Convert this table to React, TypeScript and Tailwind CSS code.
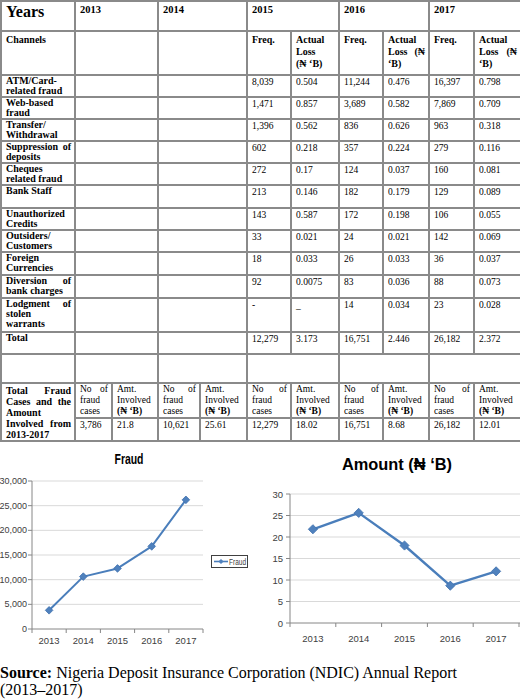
import React from "react";

type Line = string | { j: string };

const J = "text-justify [text-align-last:justify]";

function Lines({ lines }: { lines: Line[] }) {
  return (
    <>
      {lines.map((l, i) =>
        typeof l === "string" ? (
          <div key={i}>{l}</div>
        ) : (
          <div key={i} className={J}>
            {l.j}
          </div>
        )
      )}
    </>
  );
}

const cell = "border-2 border-[#8a8a8a] align-top pl-[4px] pr-[3px] pt-0";
const label = `${cell} font-bold text-[10px] leading-[10px]`;
const data = `${cell} text-[9.5px] leading-[10px] pt-[1px]`;

const rows: { label: Line[]; v: string[]; h: string }[] = [
  { label: ["ATM/Card-", "related fraud"], v: ["8,039", "0.504", "11,244", "0.476", "16,397", "0.798"], h: "h-[22px]" },
  { label: ["Web-based", "fraud"], v: ["1,471", "0.857", "3,689", "0.582", "7,869", "0.709"], h: "h-[22px]" },
  { label: ["Transfer/", "Withdrawal"], v: ["1,396", "0.562", "836", "0.626", "963", "0.318"], h: "h-[22px]" },
  { label: [{ j: "Suppression of" }, "deposits"], v: ["602", "0.218", "357", "0.224", "279", "0.116"], h: "h-[22px]" },
  { label: ["Cheques", "related fraud"], v: ["272", "0.17", "124", "0.037", "160", "0.081"], h: "h-[22px]" },
  { label: ["Bank Staff"], v: ["213", "0.146", "182", "0.179", "129", "0.089"], h: "h-[23px]" },
  { label: ["Unauthorized", "Credits"], v: ["143", "0.587", "172", "0.198", "106", "0.055"], h: "h-[22px]" },
  { label: ["Outsiders/", "Customers"], v: ["33", "0.021", "24", "0.021", "142", "0.069"], h: "h-[22px]" },
  { label: ["Foreign", "Currencies"], v: ["18", "0.033", "26", "0.033", "36", "0.037"], h: "h-[23px]" },
  { label: [{ j: "Diversion of" }, "bank charges"], v: ["92", "0.0075", "83", "0.036", "88", "0.073"], h: "h-[23px]" },
  { label: [{ j: "Lodgment of" }, "stolen", "warrants"], v: ["-", "_", "14", "0.034", "23", "0.028"], h: "h-[34px]" },
  { label: ["Total"], v: ["12,279", "3.173", "16,751", "2.446", "26,182", "2.372"], h: "h-[22px]" },
];

const totals = ["3,786", "21.8", "10,621", "25.61", "12,279", "18.02", "16,751", "8.68", "26,182", "12.01"];

function FraudTable() {
  return (
    <table className="table-fixed border-collapse w-[520px] font-['Liberation_Serif',serif] text-black">
      <colgroup>
        <col className="w-[74px]" />
        <col className="w-[37px]" />
        <col className="w-[46px]" />
        <col className="w-[42px]" />
        <col className="w-[47px]" />
        <col className="w-[44px]" />
        <col className="w-[48px]" />
        <col className="w-[44px]" />
        <col className="w-[46px]" />
        <col className="w-[45px]" />
        <col className="w-[47px]" />
      </colgroup>
      <tbody>
        <tr className="h-[30px]">
          <td className={`${cell} font-bold text-[16px] leading-[18px] pt-[1px]`}>Years</td>
          {["2013", "2014", "2015", "2016", "2017"].map((y) => (
            <td key={y} colSpan={2} className={`${cell} font-bold text-[10.5px] leading-[12px] pt-[2px]`}>
              {y}
            </td>
          ))}
        </tr>
        <tr className="h-[44px]">
          <td className={`${label} pt-[2px] leading-[12px]`}>Channels</td>
          <td colSpan={2} className={cell}></td>
          <td colSpan={2} className={cell}></td>
          <td className={`${label} pt-[2px] leading-[12px]`}>Freq.</td>
          <td className={`${label} pt-[2px] leading-[12px]`}>
            <Lines lines={["Actual", "Loss", "(₦ ‘B)"]} />
          </td>
          <td className={`${label} pt-[2px] leading-[12px]`}>Freq.</td>
          <td className={`${label} pt-[2px] leading-[12px]`}>
            <Lines lines={["Actual", { j: "Loss (₦" }, "‘B)"]} />
          </td>
          <td className={`${label} pt-[2px] leading-[12px]`}>Freq.</td>
          <td className={`${label} pt-[2px] leading-[12px]`}>
            <Lines lines={["Actual", { j: "Loss (₦" }, "‘B)"]} />
          </td>
        </tr>
        {rows.map((r, i) => (
          <tr key={i} className={r.h}>
            <td className={label}>
              <Lines lines={r.label} />
            </td>
            <td colSpan={2} className={cell}></td>
            <td colSpan={2} className={cell}></td>
            {r.v.map((v, k) => (
              <td key={k} className={data}>
                {v}
              </td>
            ))}
          </tr>
        ))}
        <tr className="h-[29px]">
          <td className={cell}></td>
          <td colSpan={2} className={cell}></td>
          <td colSpan={2} className={cell}></td>
          <td colSpan={2} className={cell}></td>
          <td colSpan={2} className={cell}></td>
          <td colSpan={2} className={cell}></td>
        </tr>
        <tr className="h-[35px]">
          <td rowSpan={2} className={`${label} leading-[11px] pt-[1px]`}>
            <Lines lines={[{ j: "Total Fraud" }, { j: "Cases and the" }, "Amount", { j: "Involved from" }, "2013-2017"]} />
          </td>
          {[0, 1, 2, 3, 4].map((k) => (
            <React.Fragment key={k}>
              <td className={`${cell} text-[9.5px] leading-[11px]`}>
                <Lines lines={[{ j: "No of" }, "fraud", "cases"]} />
              </td>
              <td className={`${cell} text-[9.5px] leading-[11px]`}>
                <div>Amt.</div>
                <div>Involved</div>
                <div className="font-bold">(₦ ‘B)</div>
              </td>
            </React.Fragment>
          ))}
        </tr>
        <tr className="h-[23px]">
          {totals.map((t, k) => (
            <td key={k} className={data}>
              {t}
            </td>
          ))}
        </tr>
      </tbody>
    </table>
  );
}

const years = ["2013", "2014", "2015", "2016", "2017"];
const fraud = [3786, 10621, 12279, 16751, 26182];
const amount = [21.8, 25.61, 18.02, 8.68, 12.01];

const diamond = (x: number, y: number, r: number) => `M${x} ${y - r}L${x + r} ${y}L${x} ${y + r}L${x - r} ${y}Z`;

function FraudChart() {
  const top = 479;
  const bottom = 627;
  const left = 32;
  const right = 203;
  const step = (right - left) / 5;
  const pts = fraud.map((v, i) => [left + step * (i + 0.5), bottom - (v / 30000) * (bottom - top)]);
  return (
    <svg width="260" height="222" viewBox="0 440 260 222" className="shrink-0">
      <text x="129" y="462" textAnchor="middle" fontFamily="Liberation Sans, sans-serif" fontWeight="700" fontSize="15" textLength="29" lengthAdjust="spacingAndGlyphs" fill="#000">
        Fraud
      </text>
      {[0, 1, 2, 3, 4, 5, 6].map((i) => {
        const y = bottom - (i * (bottom - top)) / 6;
        return (
          <g key={i}>
            {i > 0 && <line x1={left} x2={right} y1={y} y2={y} stroke="#d9d9d9" strokeWidth="1" />}
            <line x1={left - 4} x2={left} y1={y} y2={y} stroke="#868686" strokeWidth="1" />
            <text x="27" y={y + 3} textAnchor="end" fontFamily="Liberation Sans, sans-serif" fontSize="9" fill="#404040">
              {(i * 5000).toLocaleString("en-US")}
            </text>
          </g>
        );
      })}
      <line x1={left} x2={left} y1={top} y2={bottom} stroke="#868686" strokeWidth="1" />
      <line x1={left} x2={right} y1={bottom} y2={bottom} stroke="#868686" strokeWidth="1" />
      {[0, 1, 2, 3, 4, 5].map((i) => (
        <line key={i} x1={left + step * i} x2={left + step * i} y1={bottom} y2={bottom + 4} stroke="#868686" strokeWidth="1" />
      ))}
      {years.map((y, i) => (
        <text key={y} x={left + step * (i + 0.5)} y="642" textAnchor="middle" fontFamily="Liberation Sans, sans-serif" fontSize="9.5" fill="#404040">
          {y}
        </text>
      ))}
      <polyline points={pts.map((p) => p.join(",")).join(" ")} fill="none" stroke="#4a7ebb" strokeWidth="2" strokeLinejoin="round" />
      {pts.map((p, i) => (
        <path key={i} d={diamond(p[0], p[1], 3.8)} fill="#4f81bd" stroke="#3f70ad" strokeWidth="0.8" />
      ))}
      <rect x="211.5" y="553.5" width="36" height="12" fill="#fff" stroke="#404040" strokeWidth="1" />
      <line x1="214" x2="228" y1="559.5" y2="559.5" stroke="#4a7ebb" strokeWidth="1.6" />
      <path d={diamond(221, 559.5, 2.6)} fill="#4f81bd" />
      <text x="229" y="563" fontFamily="Liberation Sans, sans-serif" fontSize="9" textLength="17" lengthAdjust="spacingAndGlyphs" fill="#404040">
        Fraud
      </text>
    </svg>
  );
}

function AmountChart() {
  const top = 492;
  const bottom = 621;
  const left = 290;
  const right = 519;
  const step = (right - left) / 5;
  const pts = amount.map((v, i) => [left + step * (i + 0.5), bottom - (v / 30) * (bottom - top)]);
  return (
    <svg width="260" height="222" viewBox="260 440 260 222" className="shrink-0">
      <text x="397" y="468" textAnchor="middle" fontFamily="Liberation Sans, sans-serif" fontWeight="700" fontSize="17" textLength="110" lengthAdjust="spacingAndGlyphs" fill="#000">
        Amount (₦ ‘B)
      </text>
      {[0, 1, 2, 3, 4, 5, 6].map((i) => {
        const y = bottom - (i * (bottom - top)) / 6;
        return (
          <g key={i}>
            {i > 0 && <line x1={left} x2="520" y1={y} y2={y} stroke="#d9d9d9" strokeWidth="1" />}
            <line x1={left - 4} x2={left} y1={y} y2={y} stroke="#868686" strokeWidth="1" />
            <text x="283" y={y + 3.5} textAnchor="end" fontFamily="Liberation Sans, sans-serif" fontSize="9.5" fill="#404040">
              {i * 5}
            </text>
          </g>
        );
      })}
      <line x1={left} x2={left} y1={top} y2={bottom} stroke="#868686" strokeWidth="1" />
      <line x1={left} x2="520" y1={bottom} y2={bottom} stroke="#868686" strokeWidth="1" />
      {[0, 1, 2, 3, 4, 5].map((i) => (
        <line key={i} x1={left + step * i} x2={left + step * i} y1={bottom} y2={bottom + 4} stroke="#868686" strokeWidth="1" />
      ))}
      {years.map((y, i) => (
        <text key={y} x={left + step * (i + 0.5)} y="640" textAnchor="middle" fontFamily="Liberation Sans, sans-serif" fontSize="9.5" fill="#404040">
          {y}
        </text>
      ))}
      <polyline points={pts.map((p) => p.join(",")).join(" ")} fill="none" stroke="#4a7ebb" strokeWidth="2.4" strokeLinejoin="round" />
      {pts.map((p, i) => (
        <path key={i} d={diamond(p[0], p[1], 4.6)} fill="#4f81bd" stroke="#3f70ad" strokeWidth="0.8" />
      ))}
    </svg>
  );
}

export default function App() {
  return (
    <div className="w-[520px] h-[700px] overflow-hidden bg-white">
      <FraudTable />
      <div className="flex h-[222px]">
        <FraudChart />
        <AmountChart />
      </div>
      <p className="font-['Liberation_Serif',serif] text-[16px] leading-[17px] text-black">
        <span className="font-bold">Source:</span> Nigeria Deposit Insurance Corporation (NDIC) Annual Report
        <br />
        (2013–2017)
      </p>
    </div>
  );
}
